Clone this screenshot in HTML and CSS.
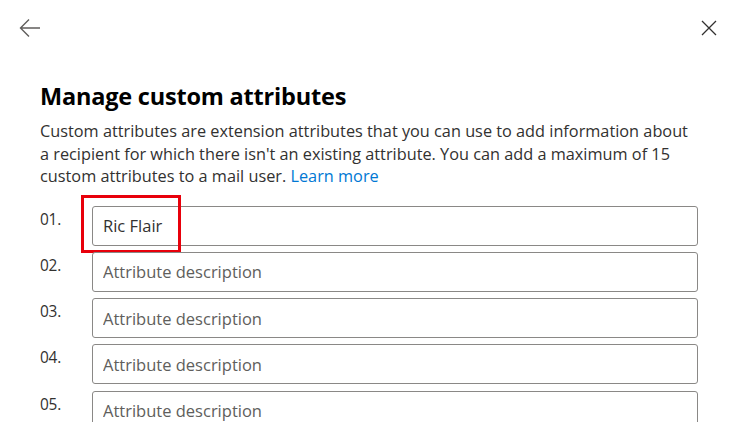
FILE: index.html
```html
<!DOCTYPE html>
<html lang="en">
<head>
<meta charset="utf-8">
<title>Manage custom attributes</title>
<link rel="stylesheet" href="styles.css">
</head>
<body>
<div class="panel">
  <div class="topbar">
    <button class="icon-btn" aria-label="Back">
      <svg width="22" height="20" viewBox="0 0 22 20"><path d="M21 10H2M10 1.5L1.5 10L10 18.5" fill="none" stroke="#605e5c" stroke-width="1.4"/></svg>
    </button>
    <button class="icon-btn" aria-label="Close">
      <svg width="16" height="16" viewBox="0 0 16 16"><path d="M1 1L15 15M15 1L1 15" fill="none" stroke="#323130" stroke-width="1.3"/></svg>
    </button>
  </div>
  <div class="content">
    <h1 class="title">Manage custom attributes</h1>
    <p class="desc">Custom attributes are extension attributes that you can use to add information about a recipient for which there isn't an existing attribute. You can add a maximum of 15 custom attributes to a mail user. <a class="link" href="#">Learn more</a></p>
    <div class="rows">
      <div class="row">
        <span class="num">01.</span>
        <div class="field-wrap">
          <input class="field" type="text" value="Ric Flair">
          <span class="highlight"></span>
        </div>
      </div>
      <div class="row"><span class="num">02.</span><div class="field-wrap"><input class="field" type="text" placeholder="Attribute description"></div></div>
      <div class="row"><span class="num">03.</span><div class="field-wrap"><input class="field" type="text" placeholder="Attribute description"></div></div>
      <div class="row"><span class="num">04.</span><div class="field-wrap"><input class="field" type="text" placeholder="Attribute description"></div></div>
      <div class="row"><span class="num">05.</span><div class="field-wrap"><input class="field" type="text" placeholder="Attribute description"></div></div>
    </div>
  </div>
</div>
</body>
</html>
```
FILE: styles.css
```css
html, body {
  margin: 0;
  padding: 0;
  background: #ffffff;
  overflow: hidden;
}
body {
  font-family: "Open Sans", "Noto Sans", sans-serif;
  color: #323130;
}
.panel {
  width: 734px;
  height: 422px;
}
.topbar {
  display: flex;
  justify-content: space-between;
  align-items: center;
  height: 56px;
  padding: 0 13px 0 18px;
}
.icon-btn {
  border: 0;
  background: none;
  padding: 0;
  display: flex;
  align-items: center;
  justify-content: center;
  width: 24px;
  height: 24px;
  cursor: pointer;
}
.content {
  padding: 0 36px 0 40px;
}
.title {
  margin: 24px 0 0;
  font-size: 23.5px;
  line-height: 32px;
  font-weight: 700;
  color: #000000;
  letter-spacing: -0.2px;
}
.desc {
  margin: 8px 0 0;
  font-size: 16.3px;
  line-height: 22.5px;
  color: #323130;
}
.link {
  color: #0078d4;
  text-decoration: none;
}
.rows {
  margin-top: 18px;
  display: flex;
  flex-direction: column;
  gap: 6.3px;
}
.row {
  display: flex;
  align-items: flex-start;
}
.num {
  width: 52px;
  flex: none;
  font-size: 15.4px;
  line-height: 22px;
  color: #323130;
  letter-spacing: -0.2px;
  padding-top: 3px;
}
.field-wrap {
  position: relative;
  flex: 1;
}
.field {
  box-sizing: border-box;
  display: block;
  width: 100%;
  height: 40px;
  border: 1px solid #8a8886;
  border-radius: 3px;
  padding: 0 10px;
  font-family: inherit;
  font-size: 16.5px;
  color: #323130;
  background: #ffffff;
  outline: none;
}
.field::placeholder {
  color: #605e5c;
  opacity: 1;
}
.highlight {
  position: absolute;
  left: -11px;
  top: -11px;
  width: 100px;
  height: 58px;
  box-sizing: border-box;
  border: 3px solid #e8000b;
  pointer-events: none;
}
```
